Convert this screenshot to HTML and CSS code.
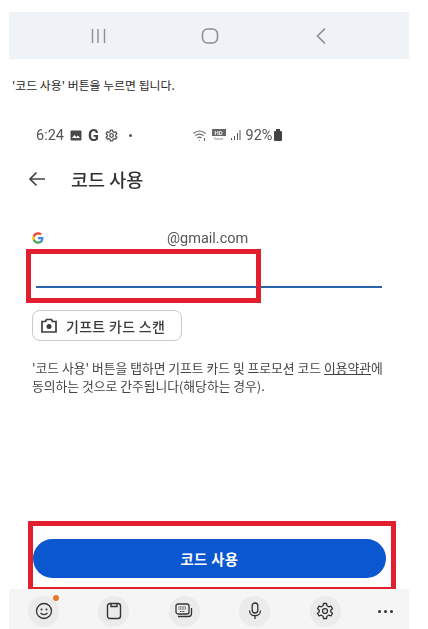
FILE: index.html
```html
<!DOCTYPE html>
<html lang="en">
<head>
    <meta charset="UTF-8">
    <meta name="viewport" content="width=device-width, initial-scale=1.0">
    <title>코드 사용</title>
    <link rel="stylesheet" href="styles.css">
</head>
<body>
    <div class="page">
        <div class="nav-bar">
            <svg width="16" height="16" viewBox="0 0 16 16"><path d="M2.500 1v14M8 1v14M14.500 1v14" stroke="#8c8f94" stroke-width="1.400" fill="none"/></svg>
            <svg width="18" height="16" viewBox="0 0 18 16"><rect x="1.500" y="1" width="15" height="14" rx="5" stroke="#8c8f94" stroke-width="1.600" fill="none"/></svg>
            <svg width="12" height="16" viewBox="0 0 12 16"><path d="M11 .5L3.500 8l7.500 7.500" stroke="#8c8f94" stroke-width="1.600" fill="none"/></svg>
        </div>

        <p class="caption">'코드 사용' 버튼을 누르면 됩니다.</p>

        <div class="shot">
            <div class="status-bar">
                <div class="status-left">
                    <span class="time">6:24</span>
                    <svg width="12" height="11" viewBox="0 0 12 11"><rect width="11" height="10" x="0.500" y="0.500" rx="1" fill="#4a4a4a"/><path d="M2 8l2.500-3 2 2 1.500-1.500L10 8z" fill="#fff"/></svg>
                    <span class="status-g">G</span>
                    <svg width="13" height="13" viewBox="0 0 24 24"><path d="M10 2h4l.6 3 2.400 1.400 2.900-1 2 3.500-2.300 2v2.200l2.300 2-2 3.500-2.900-1-2.400 1.400-.6 3h-4l-.6-3L7 17.600l-2.900 1-2-3.500 2.300-2v-2.200l-2.300-2 2-3.500 2.900 1L9.400 5z" fill="none" stroke="#555" stroke-width="2.400" stroke-linejoin="round"/><circle cx="12" cy="12" r="3.300" fill="none" stroke="#555" stroke-width="2.400"/></svg>
                    <span class="status-dot"></span>
                </div>
                <div class="status-right">
                    <svg width="14" height="13" viewBox="0 0 14 13"><path d="M.5 4.500c3.300-3.300 8.700-3.300 12 0M2.500 6.800c2.200-2.200 5.800-2.200 8 0M4.500 9c1.100-1.100 2.900-1.100 4 0" stroke="#666" stroke-width="1.100" fill="none"/><path d="M6 11l.5.500.5-.500M11.500 9v3" stroke="#666" stroke-width="1" fill="none"/></svg>
                    <span class="hd-icon"><span class="hd-top">HD</span><span class="hd-label">Voice</span></span>
                    <svg width="11" height="10" viewBox="0 0 11 10"><path d="M1 8v2h1V8zM4 6v4h1V6zM7 3v7h1V3zM9.500 0v10h1V0z" fill="#555"/></svg>
                    <span class="percent">92%</span>
                    <span class="battery"></span>
                </div>
            </div>

            <div class="header">
                <svg width="18" height="16" viewBox="0 0 18 16"><path d="M17 8H2M8.500 1.500L2 8l6.500 6.500" stroke="#444" stroke-width="1.700" fill="none"/></svg>
                <h1>코드 사용</h1>
            </div>

            <div class="account">
                <svg class="g-logo" width="12" height="12" viewBox="0 0 24 24">
                    <path d="M23 12.300c0-.8-.1-1.600-.2-2.300H12v4.400h6.200c-.3 1.400-1.100 2.600-2.300 3.400v2.800h3.700c2.100-2 3.400-4.900 3.400-8.300z" fill="#4285f4"/>
                    <path d="M12 23.500c3.100 0 5.700-1 7.600-2.800l-3.700-2.800c-1 .7-2.300 1.100-3.900 1.100-3 0-5.500-2-6.400-4.700H1.800v2.900c1.900 3.800 5.800 6.300 10.200 6.300z" fill="#34a853"/>
                    <path d="M5.600 14.300c-.5-1.400-.5-3 0-4.500V6.900H1.800c-1.600 3.200-1.600 7 0 10.300z" fill="#fbbc05"/>
                    <path d="M12 5c1.700 0 3.200.6 4.400 1.700l3.300-3.300C17.700 1.600 15.100.5 12 .5 7.600.5 3.700 3 1.800 6.900l3.800 2.900C6.500 7 9 5 12 5z" fill="#ea4335"/>
                </svg>
                <span class="email">@gmail.com</span>
            </div>

            <div class="code-input"></div>

            <div class="scan-button">
                <svg width="16" height="15" viewBox="0 0 16 15"><path d="M1 3.500h3.500L5.500 1.500h5l1 2H15v10.500H1z" fill="none" stroke="#3c3c3c" stroke-width="1.700"/><circle cx="8" cy="8.500" r="2.500" fill="#3c3c3c"/></svg>
                <span>기프트 카드 스캔</span>
            </div>

            <p class="terms">'코드 사용' 버튼을 탭하면 기프트 카드 및 프로모션 코드 <u>이용약관</u>에<br>동의하는 것으로 간주됩니다(해당하는 경우).</p>

            <div class="redeem-button">코드 사용</div>

            <div class="highlight highlight-input"></div>
            <div class="highlight highlight-button"></div>
        </div>

        <div class="tool-bar">
            <span class="tool">
                <svg width="18" height="18" viewBox="0 0 18 18"><circle cx="9" cy="9" r="7.500" fill="none" stroke="#333" stroke-width="1.300"/><circle cx="6.500" cy="7.500" r="1" fill="#333"/><circle cx="11.500" cy="7.500" r="1" fill="#333"/><path d="M5.500 10.800c1.500 2.300 5.500 2.300 7 0" fill="none" stroke="#333" stroke-width="1.200"/></svg>
                <span class="badge"></span>
            </span>
            <span class="tool">
                <svg width="16" height="18" viewBox="0 0 16 18"><rect x="1.500" y="1.500" width="13" height="15" rx="2.500" fill="none" stroke="#333" stroke-width="1.400"/><path d="M5 1.500v3h6v-3" fill="none" stroke="#333" stroke-width="1.400"/></svg>
            </span>
            <span class="tool">
                <svg width="18" height="18" viewBox="0 0 18 18"><rect x="1" y="2" width="13" height="10" rx="2" fill="none" stroke="#333" stroke-width="1.300"/><path d="M3.500 5h8M3.500 7h8M5 9.500h5" stroke="#333" stroke-width="1" stroke-dasharray="1 .6" fill="none"/><path d="M3 14.500h10.500a3 3 0 0 0 3-3V6" fill="none" stroke="#333" stroke-width="1.300"/></svg>
            </span>
            <span class="tool">
                <svg width="14" height="18" viewBox="0 0 14 18"><rect x="4.200" y="1" width="5.600" height="10" rx="2.800" fill="none" stroke="#333" stroke-width="1.300"/><path d="M1.500 8.500c0 7 11 7 11 0M7 13.500V17" fill="none" stroke="#333" stroke-width="1.300"/></svg>
            </span>
            <span class="tool">
                <svg width="18" height="18" viewBox="0 0 24 24"><path d="M10 2h4l.6 3 2.400 1.400 2.900-1 2 3.500-2.300 2v2.200l2.300 2-2 3.500-2.900-1-2.400 1.400-.6 3h-4l-.6-3L7 17.600l-2.900 1-2-3.500 2.300-2v-2.200l-2.300-2 2-3.500 2.900 1L9.400 5z" fill="none" stroke="#333" stroke-width="1.700" stroke-linejoin="round"/><circle cx="12" cy="12" r="3.300" fill="none" stroke="#333" stroke-width="1.700"/></svg>
            </span>
            <span class="more"><i></i><i></i><i></i></span>
        </div>
    </div>
</body>
</html>
```

FILE: styles.css
```css
body {
    margin: 0;
    background-color: #fff;
    font-family: "Noto Sans CJK KR", Roboto, sans-serif;
    color: #333;
}

.page {
    width: 400px;
    height: 629px;
    margin-left: 9px;
    padding-top: 12px;
    box-sizing: border-box;
    overflow: hidden;
}

/* Top navigation strip */
.nav-bar {
    height: 47px;
    background-color: #eff2f7;
    display: flex;
    align-items: center;
    padding-left: 81px;
    gap: 95px;
}

.caption {
    margin: 17px 0 11px 3px;
    height: 18px;
    line-height: 18px;
    font-size: 11.900px;
    color: #2a2a2a;
}

/* Embedded phone screenshot */
.shot {
    position: relative;
    height: 495px;
    filter: blur(.3px);
}

.status-bar {
    position: absolute;
    top: 21px;
    left: 27px;
    display: flex;
    align-items: center;
    height: 18px;
}

.status-left {
    display: flex;
    align-items: center;
    gap: 6px;
    width: 157px;
}

.status-right {
    display: flex;
    align-items: center;
    gap: 4.500px;
}

.time,
.percent {
    font-family: Roboto, sans-serif;
    font-size: 14.500px;
    color: #555;
}

.status-g {
    font-family: Roboto, sans-serif;
    font-weight: 700;
    font-size: 16px;
    color: #444;
}

.status-dot {
    width: 3px;
    height: 3px;
    margin-left: 5px;
    border-radius: 50%;
    background-color: #555;
}

.hd-icon {
    width: 14px;
    display: flex;
    flex-direction: column;
    align-items: center;
}

.hd-top {
    width: 14px;
    height: 7px;
    background-color: #666;
    color: #eee;
    font-family: Roboto, sans-serif;
    font-size: 6px;
    line-height: 7px;
    font-weight: 700;
    text-align: center;
}

.hd-label {
    font-family: Roboto, sans-serif;
    font-size: 4px;
    line-height: 5px;
    color: #777;
}

.battery {
    position: relative;
    width: 8px;
    height: 10px;
    margin: 2px 0 0 -2.500px;
    border-radius: 1px;
    background-color: #444;
}

.battery::before {
    content: "";
    position: absolute;
    top: -2px;
    left: 2px;
    width: 4px;
    height: 2px;
    background-color: #444;
}

.header {
    position: absolute;
    top: 61px;
    left: 19px;
    display: flex;
    align-items: center;
    height: 26px;
    gap: 25px;
}

.header h1 {
    margin: 0;
    font-size: 18.500px;
    font-weight: 500;
    color: #333;
}

.account {
    position: absolute;
    top: 125px;
    left: 23px;
    width: 330px;
    height: 16px;
    display: flex;
    align-items: center;
}

.email {
    margin-left: 123px;
    font-family: Roboto, sans-serif;
    font-size: 14.500px;
    color: #555;
}

.code-input {
    position: absolute;
    top: 181px;
    left: 27px;
    width: 346px;
    height: 2px;
    background-color: #2a64ad;
}

.scan-button {
    position: absolute;
    top: 205px;
    left: 23px;
    width: 150px;
    height: 31px;
    box-sizing: border-box;
    border: 1px solid #c9c9c9;
    border-radius: 8px;
    display: flex;
    align-items: center;
    padding-left: 8px;
    gap: 9px;
    font-size: 14px;
    font-weight: 500;
    letter-spacing: .3px;
    color: #3a3a3a;
}

.terms {
    position: absolute;
    top: 254px;
    left: 23px;
    width: 360px;
    margin: 0;
    font-size: 12.800px;
    line-height: 18px;
    color: #444;
    white-space: nowrap;
}

.redeem-button {
    position: absolute;
    top: 434px;
    left: 24px;
    width: 353px;
    height: 39px;
    border-radius: 20px;
    background-color: #0b57cf;
    color: #fff;
    font-size: 14.300px;
    font-weight: 700;
    letter-spacing: .4px;
    display: flex;
    align-items: center;
    justify-content: center;
}

/* Red annotation boxes drawn over the screenshot */
.highlight {
    position: absolute;
    box-sizing: border-box;
    border: 5px solid #e0202e;
}

.highlight-input {
    top: 144px;
    left: 17px;
    width: 235px;
    height: 54px;
}

.highlight-button {
    top: 416px;
    left: 19px;
    width: 368px;
    height: 71px;
}

/* Bottom keyboard toolbar */
.tool-bar {
    height: 40px;
    background-color: #f5f5f5;
    display: flex;
    align-items: center;
    padding-left: 19px;
    gap: 39.400px;
    position: relative;
    top: -11px;
}

.tool {
    position: relative;
    width: 31px;
    height: 31px;
    flex-shrink: 0;
    border-radius: 50%;
    background-color: #ebebeb;
    display: flex;
    align-items: center;
    justify-content: center;
    margin-top: 4px;
}

.badge {
    position: absolute;
    top: -1px;
    right: 0;
    width: 6px;
    height: 6px;
    border-radius: 50%;
    background-color: #e8792b;
}

.more {
    display: flex;
    gap: 3px;
    margin: 4px 0 0 -2px;
}

.more i {
    width: 3px;
    height: 3px;
    border-radius: 50%;
    background-color: #333;
}
```
